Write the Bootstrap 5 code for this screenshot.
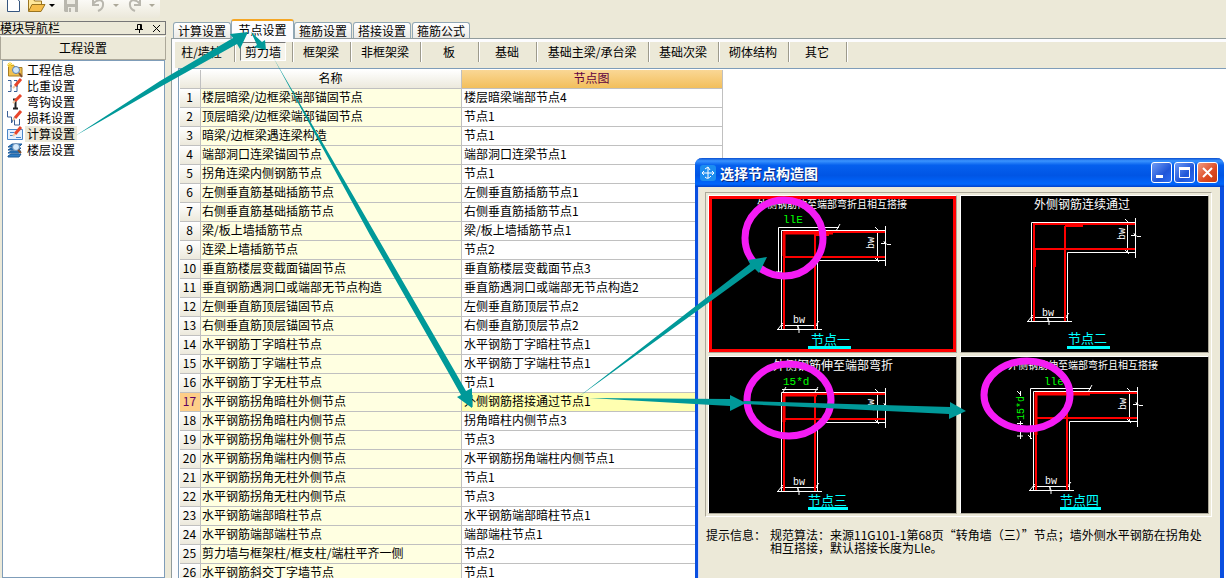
<!DOCTYPE html>
<html lang="zh-CN">
<head>
<meta charset="utf-8">
<meta name="viewport" content="width=device-width, initial-scale=1">
<title>工程设置</title>
<link href="https://cdn.jsdelivr.net/npm/bootstrap@5.3.0/dist/css/bootstrap.min.css" rel="stylesheet">
<style>
  body { font: 12px/16px "Noto Sans CJK SC", sans-serif; background: #ece9d8; color: #000; }
  button { font: inherit; color: inherit; padding: 0; border: 0; background: none; }
  .app { height: 100vh; overflow: hidden; }

  /* tool bar */
  .tools { height: 21px; }
  .tools-strip { width: 160px; height: 18px; padding: 0 4px; background: linear-gradient(#fbfaf6, #ebe8da); border-radius: 0 0 4px 0; }
  .tools svg, .tree svg, .title-bar svg { display: block; flex: none; }
  .tools-rule { width: 1px; height: 15px; background: #aca899; }

  /* left panel */
  .work { min-height: 0; }
  .side { width: 166px; flex: none; }
  .side-head { height: 14px; border: 1px solid #777; border-left: 0; line-height: 12px; }
  .side-group { height: 24px; margin-top: 1px; border: 1px solid #aca899; border-top-color: #fff; }
  .tree { margin: 0 1px 0 2px; padding: 1px 4px; background: #fff; border: 1px solid #7f9db9; }
  .tree a { display: flex; gap: 2px; height: 16px; color: #000; text-decoration: none; }
  .tree span { padding: 0 2px; line-height: 15px; }
  .tree a.current span { background: #ece9d8; }

  /* tabs */
  .main { margin-left: 5px; min-width: 0; }
  .page-tabs { height: 17px; gap: 1px; border: 0; align-items: flex-end; padding-left: 2px; flex-wrap: nowrap; }
  .page-tabs button { height: 16px; padding: 0 1px; width: 58px; line-height: 16px; border: 1px solid #91a7b4; border-bottom: 0; border-radius: 3px 3px 0 0; background: linear-gradient(#fff, #ecebe6); white-space: nowrap; }
  .page-tabs button.active { height: 20px; width: 63px; margin: 0 -1px -1px; border-top: 2px solid #f5a623; background: #fcfcfe; position: relative; line-height: 16px; }
  .page { border-top: 1px solid #919b9c; border-left: 1px solid #919b9c; background: #fcfcfe; padding: 3px 0 0 3px; min-height: 0; }
  .sub-bar { background: #ece9d8; height: 26px; }
  .sub-bar div { display: flex; justify-content: center; height: 20px; min-width: 58px; padding: 0 5px 0 4px; border-right: 1px solid #9d9a8c; box-shadow: 1px 0 #fff; }
  .sub-bar div:first-child { width: 60px; padding: 0 10px 0 4px; }
  .sub-bar div.wide { width: 112px; }
  .sub-bar button { height: 19px; padding: 0 6px; white-space: nowrap; line-height: 17px; }
  .sub-bar div:first-child button { padding: 0; }
  .sub-bar button.active { padding: 0 4px; border: 1px solid; border-color: #777 #fff #fff #777; background: #f6f4ec; }

  /* node table */
  .sheet { background: #fff; border-top: 1px solid #7f9db9; border-left: 1px solid #7f9db9; margin-left: 3px; padding: 1px 0 0 1px; overflow: hidden; }
  .sheet table { width: 543px; table-layout: fixed; border-collapse: separate; border-spacing: 0; }
  .sheet th, .sheet td { height: 19px; padding: 0 2px 2px 1px; line-height: 16px; border-right: 1px solid #c0c0c0; border-bottom: 1px solid #c0c0c0; white-space: nowrap; font-weight: 400; }
  .sheet th { text-align: center; background: linear-gradient(#fff, #ece9dc); }
  .sheet td:nth-child(2) { background: #ffffe1; }
  .sheet td:nth-child(3) { padding-left: 2px; }
  .sheet thead th:last-child { background: linear-gradient(#fad795, #f2bf5c); color: #600040; }
  .sheet tr.picked th { background: #fdce88; color: #600060; }
  .sheet tr.picked td:last-child { background: #ffffb0; }

  /* dialog window */
  .dialog { position: absolute; z-index: 2; left: 695px; top: 158px; width: 529px; height: 430px; background: #ece9d8; border: solid #0a4fe0; border-width: 0 4px 0 3px; border-radius: 7px 7px 0 0; box-shadow: inset 1px 0 #d8dcf0; }
  .title-bar { height: 29px; margin: 0 -4px 0 -3px; padding: 0 6px 0 5px; gap: 4px; border-radius: 7px 7px 0 0; background: linear-gradient(#0a4fd0, #3a94ff 10%, #0560ee 25%, #0055e5 60%, #0066fc 90%, #0040c8); color: #fff; }
  .title-bar strong { font-size: 14px; text-shadow: 1px 1px #0a2a80; }
  .win-btn { width: 21px; height: 21px; border: 1px solid #fff; border-radius: 3px; background: linear-gradient(135deg, #6f9bf5, #1f55d8 60%, #2b6cf2); }
  .win-btn.close-btn { background: linear-gradient(135deg, #f09a80, #dd4a22 60%, #c93a10); }
  .choices { margin: 5px 8px 0 7px; padding: 2px; border: 1px solid; border-color: #aca899 #fff #fff #aca899; display: grid; grid-template-columns: 1fr 1fr; gap: 3px; }
  .choices button { border: 1px solid; border-color: #fff #aca899 #aca899 #fff; background: #000; }
  .choices svg { display: block; width: 100%; height: 156px; }
  .choices button.active svg { outline: 3px solid #f00; outline-offset: -3px; }
  .cap { font-size: 12px; fill: #fff; }
  .cap-small { font-size: 10px; fill: #fff; }
  .dim { font: 10px "Liberation Mono", monospace; fill: #fff; }
  .len { font: 11px "Liberation Mono", monospace; fill: #0f0; }
  .name { font-size: 13px; fill: #0ff; }
  .hint { margin: 11px 6px 0 8px; gap: 4px; line-height: 13px; }

  .notes { position: absolute; z-index: 3; left: 0; top: 0; pointer-events: none; }
</style>
</head>
<body>
<svg width="0" height="0" class="position-absolute" aria-hidden="true">
  <!-- corner wall; the origin is the outer corner -->
  <symbol id="wall" overflow="visible">
    <g fill="none" stroke="#fff">
      <path d="M.5 99V.5H105M36.5 99V30.5H105M96.5 0V30M104.5-4V36M94-3l4 4M94 28l4 4M100 13.500h4l-1-2 3 3h4"/>
      <path d="M0 95.500H37M-4 99.500H41M-3 99l5-6M33 97l5-6M17 99v-4M16 95l2 4v4"/>
    </g>
    <path d="M3 99V2H104M34 99V4M3 27H104" fill="none" stroke="#f00" stroke-width="2"/>
  </symbol>
</svg>

<div class="app d-flex flex-column">
  <header class="tools flex-shrink-0">
    <div class="tools-strip d-flex align-items-start">
      <button aria-label="新建"><svg width="18" height="13"><path d="M3.500-2h8l4 3v10.500h-12z" fill="#fff" stroke="#35557f"/></svg></button>
      <button aria-label="打开" class="ms-1"><svg width="20" height="13"><path d="M2.500 11V-1h5l1 2h7v3" fill="#ffe79a" stroke="#9a7420"/><path d="M2.500 11.500 6 4.500h13l-4 7z" fill="#f6bd4a" stroke="#9a7420"/></svg></button>
      <svg width="12" height="13"><path d="M3 4h6L6 7z"/></svg>
      <button aria-label="保存" class="ms-1"><svg width="18" height="13"><path d="M2-2h14v14H3l-1-1z" fill="#b9b7ae"/><path d="M5-2h8v6H5zM6 7h7v5H6z" fill="#eeece4"/><path d="M7 8h2v4H7z" fill="#b9b7ae"/></svg></button>
      <span class="tools-rule ms-1"></span>
      <button aria-label="撤销" class="ms-2"><svg width="14" height="13"><path d="M1-1v6h6M1 4C5-1 12-1 11 5q0 4-5 6" fill="none" stroke="#b9b7ae" stroke-width="2"/></svg></button>
      <svg width="18" height="13"><path d="M7 4h6l-3 3z" fill="#aca899"/></svg>
      <button aria-label="重做" class="ms-1"><svg width="14" height="13"><path d="M12-1v6H6M12 4C8-1 1-1 2 5q0 4 5 6" fill="none" stroke="#b9b7ae" stroke-width="2"/></svg></button>
      <svg width="16" height="13"><path d="M7 4h6l-3 3z" fill="#aca899"/></svg>
    </div>
  </header>

  <div class="work d-flex flex-grow-1">
    <aside class="side d-flex flex-column">
      <div class="side-head d-flex align-items-center">
        <span class="me-auto">模块导航栏</span>
        <button aria-label="固定"><svg width="9" height="10" class="d-block" fill="none" stroke="#000"><path d="M2.500 6V1.500h4V6M5.500 1v5M0 6.500h8M4.500 7v3"/></svg></button>
        <button aria-label="关闭" class="ms-2 me-1"><svg width="9" height="9" class="d-block" stroke="#000"><path d="M1 1l7 7M8 1 1 8"/></svg></button>
      </div>
      <button class="side-group">工程设置</button>
      <nav class="tree flex-grow-1">
        <a href="#"><svg width="16" height="16"><path d="M1.500 14V3.500H7l1 2h7V14z" fill="#f0c050" stroke="#a87c20"/><path d="M3 0v7M0 3h7M1 1l4 4M5 1 1 5" stroke="#f8d030"/><circle cx="9" cy="8" r="3.500" fill="#cfe6fa" stroke="#5b80b0"/><path d="m12 11 3 4" stroke="#805030" stroke-width="2"/></svg><span>工程信息</span></a>
        <a href="#"><svg width="16" height="16" fill="none" stroke="#3a5f95"><path d="M1 2.500h3v11H1M7 2.500h3v11H7M3 8h2M9 8h2"/><path d="m8 8 6-7" stroke="#e8452a" stroke-width="3"/><path d="m6 10 2-2" stroke="#f3c9a0" stroke-width="2"/></svg><span>比重设置</span></a>
        <a href="#"><svg width="16" height="16" fill="none" stroke="#222"><path d="M6 5.500h4M8.500 6v8M6 14.500h5" stroke-width="2"/><path d="m8 7 6-6" stroke="#e8452a" stroke-width="3"/><path d="m6 9 2-2" stroke="#f3c9a0" stroke-width="2"/></svg><span>弯钩设置</span></a>
        <a href="#"><svg width="16" height="16" fill="none" stroke="#3a5f95"><path d="M.5 1v6h4v6l3-6v8h5V9"/><path d="m8 8 6-7" stroke="#e8452a" stroke-width="3"/><path d="m6 10 2-2" stroke="#f3c9a0" stroke-width="2"/></svg><span>损耗设置</span></a>
        <a href="#" class="current"><svg width="16" height="16"><path d="M.5 3.500h15v10H.5z" fill="#e4f0fd" stroke="#4a86c8"/><path d="M3 6.500h4M3 9.500h4M9 11.500h5" stroke="#4a86c8"/><path d="m8 8 6-7" stroke="#e8452a" stroke-width="3"/><path d="m6 10 2-2" stroke="#f3c9a0" stroke-width="2"/></svg><span>计算设置</span></a>
        <a href="#"><svg width="16" height="16"><path d="m1 5 4-3h10l-3 3zM1 8l3-2h10l-2 2zM1 11l3-2h10l-2 2zM1 14l3-2h10l-2 3H1z" fill="#2d7cc4" stroke="#1d5a98"/><circle cx="9" cy="5" r="3.500" fill="#d6ebfb" stroke="#6d8fb5"/><path d="m11 8 3 3" stroke="#805030" stroke-width="2"/></svg><span>楼层设置</span></a>
      </nav>
    </aside>

    <main class="main d-flex flex-column flex-grow-1">
      <div class="page-tabs nav nav-tabs flex-shrink-0" role="tablist">
        <button role="tab">计算设置</button>
        <button role="tab" class="active" aria-selected="true">节点设置</button>
        <button role="tab">箍筋设置</button>
        <button role="tab">搭接设置</button>
        <button role="tab">箍筋公式</button>
      </div>
      <div class="page d-flex flex-column flex-grow-1">
        <div class="sub-bar d-flex flex-shrink-0">
          <div><button>柱/墙柱</button></div>
          <div><button class="active">剪力墙</button></div>
          <div><button>框架梁</button></div>
          <div><button>非框架梁</button></div>
          <div><button>板</button></div>
          <div><button>基础</button></div>
          <div class="wide"><button>基础主梁/承台梁</button></div>
          <div><button>基础次梁</button></div>
          <div><button>砌体结构</button></div>
          <div><button>其它</button></div>
        </div>
        <div class="sheet flex-grow-1">
          <table>
            <colgroup><col style="width:21px"><col style="width:261px"><col style="width:261px"></colgroup>
            <thead><tr><th></th><th>名称</th><th>节点图</th></tr></thead>
            <tbody>
              <tr><th>1</th><td>楼层暗梁/边框梁端部锚固节点</td><td>楼层暗梁端部节点4</td></tr>
              <tr><th>2</th><td>顶层暗梁/边框梁端部锚固节点</td><td>节点1</td></tr>
              <tr><th>3</th><td>暗梁/边框梁遇连梁构造</td><td>节点1</td></tr>
              <tr><th>4</th><td>端部洞口连梁锚固节点</td><td>端部洞口连梁节点1</td></tr>
              <tr><th>5</th><td>拐角连梁内侧钢筋节点</td><td>节点1</td></tr>
              <tr><th>6</th><td>左侧垂直筋基础插筋节点</td><td>左侧垂直筋插筋节点1</td></tr>
              <tr><th>7</th><td>右侧垂直筋基础插筋节点</td><td>右侧垂直筋插筋节点1</td></tr>
              <tr><th>8</th><td>梁/板上墙插筋节点</td><td>梁/板上墙插筋节点1</td></tr>
              <tr><th>9</th><td>连梁上墙插筋节点</td><td>节点2</td></tr>
              <tr><th>10</th><td>垂直筋楼层变截面锚固节点</td><td>垂直筋楼层变截面节点3</td></tr>
              <tr><th>11</th><td>垂直钢筋遇洞口或端部无节点构造</td><td>垂直筋遇洞口或端部无节点构造2</td></tr>
              <tr><th>12</th><td>左侧垂直筋顶层锚固节点</td><td>左侧垂直筋顶层节点2</td></tr>
              <tr><th>13</th><td>右侧垂直筋顶层锚固节点</td><td>右侧垂直筋顶层节点2</td></tr>
              <tr><th>14</th><td>水平钢筋丁字暗柱节点</td><td>水平钢筋丁字暗柱节点1</td></tr>
              <tr><th>15</th><td>水平钢筋丁字端柱节点</td><td>水平钢筋丁字端柱节点1</td></tr>
              <tr><th>16</th><td>水平钢筋丁字无柱节点</td><td>节点1</td></tr>
              <tr class="picked"><th>17</th><td>水平钢筋拐角暗柱外侧节点</td><td>外侧钢筋搭接通过节点1</td></tr>
              <tr><th>18</th><td>水平钢筋拐角暗柱内侧节点</td><td>拐角暗柱内侧节点3</td></tr>
              <tr><th>19</th><td>水平钢筋拐角端柱外侧节点</td><td>节点3</td></tr>
              <tr><th>20</th><td>水平钢筋拐角端柱内侧节点</td><td>水平钢筋拐角端柱内侧节点1</td></tr>
              <tr><th>21</th><td>水平钢筋拐角无柱外侧节点</td><td>节点1</td></tr>
              <tr><th>22</th><td>水平钢筋拐角无柱内侧节点</td><td>节点3</td></tr>
              <tr><th>23</th><td>水平钢筋端部暗柱节点</td><td>水平钢筋端部暗柱节点1</td></tr>
              <tr><th>24</th><td>水平钢筋端部端柱节点</td><td>端部端柱节点1</td></tr>
              <tr><th>25</th><td>剪力墙与框架柱/框支柱/端柱平齐一侧</td><td>节点2</td></tr>
              <tr><th>26</th><td>水平钢筋斜交丁字墙节点</td><td>节点1</td></tr>
            </tbody>
          </table>
        </div>
      </div>
    </main>
  </div>

  <section class="dialog" role="dialog" aria-label="选择节点构造图">
    <div class="title-bar d-flex align-items-center">
      <svg width="16" height="16"><rect width="16" height="16" rx="3" fill="#1c8df0"/><path d="M8 2v11M5 4l3-2 2 3M2 8h12M4 6 2 8l2 2M12 6l2 2-2 2M5 12q3 3 6-1" fill="none" stroke="#fff"/></svg>
      <strong class="me-auto">选择节点构造图</strong>
      <div class="d-flex" style="gap:2px">
        <button class="win-btn" aria-label="最小化"><svg width="19" height="19"><path d="M4 12h7v3H4z" fill="#fff"/></svg></button>
        <button class="win-btn" aria-label="最大化"><svg width="19" height="19"><path d="M4.500 5.500h10v9h-10z" fill="none" stroke="#fff"/><path d="M4 4h11v3H4z" fill="#fff"/></svg></button>
        <button class="win-btn close-btn" aria-label="关闭"><svg width="19" height="19"><path d="m5 5 9 9M14 5l-9 9" stroke="#fff" stroke-width="2"/></svg></button>
      </div>
    </div>

    <div class="choices">
      <button class="active"><svg viewBox="709 196 247 156">
        <text class="cap-small" x="757" y="208">外侧钢筋伸至端部弯折且相互搭接</text>
        <text class="len" x="783" y="223">llE</text>
        <use href="#wall" x="781" y="230"/>
        <path d="M784 256V233H833M815 234.500H829" fill="none" stroke="#f00" stroke-width="3"/>
        <path d="M778.500 272V227.500H839M836 231l4-7M776 272h5" fill="none" stroke="#fff"/>
        <text class="dim" x="793" y="323">bw</text>
        <text class="dim" transform="translate(874 249) rotate(-90)">bw</text>
        <text class="name" x="811" y="344">节点一</text><path d="M808 347.500h43" stroke="#0ff" stroke-width="3"/>
      </svg></button>
      <button><svg viewBox="961 196 247 156">
        <text class="cap" x="1034" y="209">外侧钢筋连续通过</text>
        <use href="#wall" x="1031" y="222"/>
        <path d="M1065 226h18M1035 250v17" stroke="#f00" stroke-width="2"/>
        <text class="dim" x="1042" y="316">bw</text>
        <text class="dim" transform="translate(1125 240) rotate(-90)">bw</text>
        <text class="name" x="1068" y="343">节点二</text><path d="M1067 347.500h43" stroke="#0ff" stroke-width="3"/>
      </svg></button>
      <button><svg viewBox="709 357 247 156">
        <text class="cap" x="773" y="370">外侧钢筋伸至端部弯折</text>
        <text class="len" x="783" y="385">15*d</text>
        <use href="#wall" x="781" y="392"/>
        <path d="M784 422V395H817" fill="none" stroke="#f00" stroke-width="3"/>
        <path d="M782 389.500h36M783 392l3-5M815 392l3-5" fill="none" stroke="#fff"/>
        <text class="dim" x="793" y="485">bw</text>
        <text class="dim" transform="translate(874 411) rotate(-90)">bw</text>
        <text class="name" x="808" y="505">节点三</text><path d="M808 508.500h40" stroke="#0ff" stroke-width="3"/>
      </svg></button>
      <button><svg viewBox="961 357 247 156">
        <text class="cap-small" x="1008" y="369">外侧钢筋伸至端部弯折且相互搭接</text>
        <text class="len" x="1044" y="385">lle</text>
        <use href="#wall" x="1033" y="391"/>
        <path d="M1036 435V394H1090" fill="none" stroke="#f00" stroke-width="3"/>
        <path d="M1030.500 439V388.500H1091M1088 392l4-7M1028 435l4 4M1020.500 391v5M1020.500 421v18M1017 391l4 4M1017 423.500h6M1017 427.500h6M1017 436h6" fill="none" stroke="#fff"/>
        <text class="len" transform="translate(1024 420) rotate(-90)" style="font-size:10px">15*d</text>
        <text class="dim" x="1045" y="484">bw</text>
        <text class="dim" transform="translate(1126 410) rotate(-90)">bw</text>
        <text class="name" x="1060" y="505">节点四</text><path d="M1060 508.500h41" stroke="#0ff" stroke-width="3"/>
      </svg></button>
    </div>

    <div class="hint d-flex">
      <span class="text-nowrap">提示信息：</span>
      <span>规范算法：来源11G101-1第68页“转角墙（三）”节点；墙外侧水平钢筋在拐角处<br>相互搭接，默认搭接长度为Lle。</span>
    </div>
  </section>

  <!-- hand-drawn notes lying over the windows -->
  <svg class="notes" width="1226" height="578" aria-hidden="true">
    <g fill="none" stroke="#f41cf4" stroke-width="7">
      <ellipse cx="784" cy="238" rx="39" ry="38"/>
      <ellipse cx="789" cy="400" rx="42" ry="36"/>
      <ellipse cx="1027" cy="395" rx="43" ry="34"/>
    </g>
    <g fill="#009999">
      <path d="M75 136 160 81 233 38 230 34 248 32 240 49 237 44 160 87Z"/>
      <path d="M251 32 262 42 265 40 266 50 254 47 257 45Z"/>
      <path d="M273 57 376 235 454 370 466 391 472 388 472 408 457 397 461 395 447 370 370 235Z"/>
      <path d="M577 398 750 264 748 260 767 257 759 273 755 269Z"/>
      <path d="M589 398 730 399V395L746 403 730 411V406Z"/>
      <path d="M744 401 950 407V402L966 411 949 419V414L744 404Z"/>
    </g>
  </svg>
</div>
<script src="https://cdn.jsdelivr.net/npm/bootstrap@5.3.0/dist/js/bootstrap.bundle.min.js"></script>
</body>
</html>
